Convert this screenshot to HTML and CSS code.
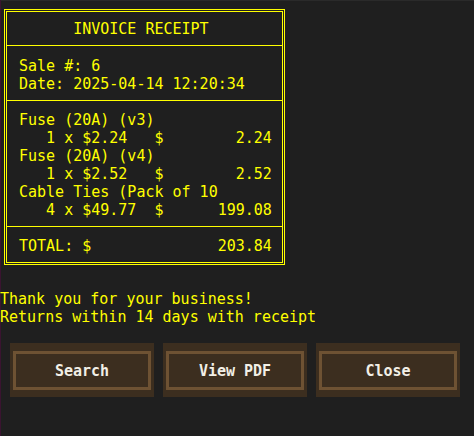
FILE: index.html
```html
<!DOCTYPE html>
<html>
<head>
<meta charset="utf-8">
<link rel="stylesheet" href="styles.css">
</head>
<body>
<div class="page">
  <div class="receipt">
    <div class="sec sec-head">      INVOICE RECEIPT</div>
    <div class="sec sec-info">Sale #: 6
Date: 2025-04-14 12:20:34</div>
    <div class="sec sec-items">Fuse (20A) (v3)
   1 x $2.24   $        2.24
Fuse (20A) (v4)
   1 x $2.52   $        2.52
Cable Ties (Pack of 10
   4 x $49.77  $      199.08</div>
    <div class="sec sec-total">TOTAL: $              203.84</div>
  </div>
  <div class="thanks">Thank you for your business!
Returns within 14 days with receipt</div>
  <div class="buttons">
    <div class="btn-wrap"><div class="btn">Search</div></div>
    <div class="btn-wrap"><div class="btn">View PDF</div></div>
    <div class="btn-wrap"><div class="btn">Close</div></div>
  </div>
</div>
</body>
</html>
```
FILE: styles.css
```css
html, body {
  margin: 0;
  padding: 0;
}
body {
  width: 474px;
  height: 436px;
  overflow: hidden;
  background:
    linear-gradient(to right, #3a1430 0, #3a1430 1px, transparent 1px),
    linear-gradient(to bottom, #2a2a2a 0, #2a2a2a 1px, transparent 1px),
    #1f1f1f;
  font-family: "DejaVu Sans Mono", "Liberation Mono", monospace;
  font-size: 15px;
  line-height: 18px;
  color: #ffff00;
}
.page {
  display: flex;
  flex-direction: column;
  padding-top: 9px;
}
.receipt {
  margin-left: 4px;
  width: 281px;
  box-sizing: border-box;
  border: 3px double #ffff00;
}
.sec {
  white-space: pre;
  padding: 0 8px 0 12px;
}
.sec + .sec {
  border-top: 1px solid #ffff00;
}
.sec-head {
  padding-top: 8px;
  padding-bottom: 7px;
}
.sec-info {
  padding-top: 11px;
  padding-bottom: 7px;
}
.sec-items {
  padding-top: 10px;
  padding-bottom: 7px;
}
.sec-total {
  padding-top: 10px;
  padding-bottom: 7px;
}
.thanks {
  white-space: pre;
  margin-top: 25px;
  padding-left: 0;
}
.buttons {
  display: flex;
  gap: 9px;
  margin-top: 17px;
  padding-left: 10px;
}
.btn-wrap {
  width: 144px;
  height: 54px;
  box-sizing: border-box;
  padding: 8px 3px 7px 3px;
  background: #3c2e1f;
}
.btn {
  height: 100%;
  box-sizing: border-box;
  border: 3px solid #6e5233;
  background: #3c2e1f;
  color: #f2efe6;
  font-weight: bold;
  display: flex;
  align-items: center;
  justify-content: center;
}
```
